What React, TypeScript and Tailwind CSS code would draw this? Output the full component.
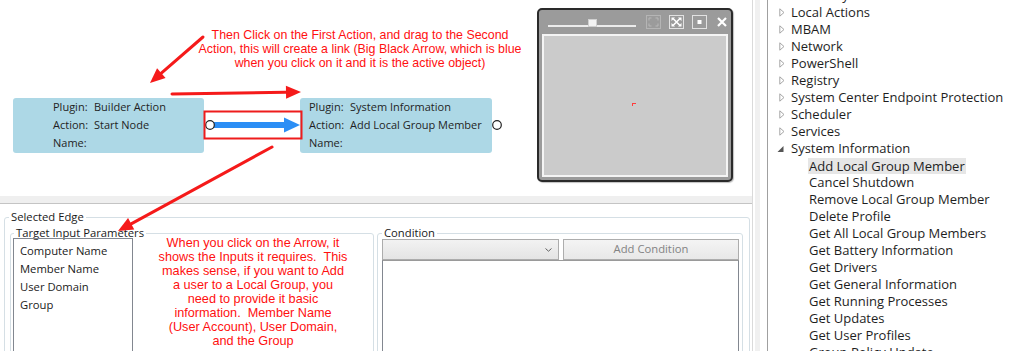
import React from 'react';

type Pt = [number, number];

// arrow head triangle + point where the shaft should stop
const head = (from: Pt, to: Pt, len = 15, half = 6.5) => {
  const dx = to[0] - from[0];
  const dy = to[1] - from[1];
  const d = Math.hypot(dx, dy);
  const ux = dx / d;
  const uy = dy / d;
  const bx = to[0] - ux * len;
  const by = to[1] - uy * len;
  return {
    base: [bx, by] as Pt,
    points: `${to[0]},${to[1]} ${bx - uy * half},${by + ux * half} ${bx + uy * half},${by - ux * half}`,
  };
};

const RedArrow = ({ from, to }: { from: Pt; to: Pt }) => {
  const h = head(from, to);
  return (
    <g>
      <line x1={from[0]} y1={from[1]} x2={h.base[0]} y2={h.base[1]} stroke="#f51a1a" strokeWidth={3} strokeLinecap="round" />
      <polygon points={h.points} fill="#f51a1a" />
    </g>
  );
};

const ActionNode = ({ plugin, action, className }: { plugin: string; action: string; className: string }) => (
  <div className={`absolute top-[98px] h-[55px] rounded-[3px] bg-[#add8e6] text-[11px] leading-[18px] text-[#1f1f1f] ${className}`}>
    <div className="flex">
      <span className="w-[41px] shrink-0">Plugin:</span>
      <span>{plugin}</span>
    </div>
    <div className="flex">
      <span className="w-[41px] shrink-0">Action:</span>
      <span>{action}</span>
    </div>
    <div className="flex">
      <span className="w-[41px] shrink-0">Name:</span>
    </div>
  </div>
);

const Collapsed = () => (
  <svg width="6" height="9" viewBox="0 0 6 9">
    <path d="M0.8 0.8 L5 4.5 L0.8 8.2 Z" fill="none" stroke="#a6a6a6" strokeWidth="1" />
  </svg>
);

const Expanded = () => (
  <svg width="7" height="9" viewBox="0 0 7 9">
    <path d="M6.5 2 L6.5 8 L0.5 8 Z" fill="#555555" />
  </svg>
);

const topLevel = ['Inventory', 'Local Actions', 'MBAM', 'Network', 'PowerShell', 'Registry', 'System Center Endpoint Protection', 'Scheduler', 'Services'];
const children = [
  'Add Local Group Member',
  'Cancel Shutdown',
  'Remove Local Group Member',
  'Delete Profile',
  'Get All Local Group Members',
  'Get Battery Information',
  'Get Drivers',
  'Get General Information',
  'Get Running Processes',
  'Get Updates',
  'Get User Profiles',
  'Group Policy Update',
];

const params = ['Computer Name', 'Member Name', 'User Domain', 'Group'];

export default function App() {
  return (
    <div className="flex h-[351px] w-[1024px] overflow-hidden bg-white font-['Open_Sans',sans-serif] text-[#1a1a1a]">
      {/* left: designer canvas + edge properties */}
      <div className="relative flex w-[753px] shrink-0 flex-col border-r border-[#dadada]">
        <div className="relative h-[196px] shrink-0">
          <ActionNode plugin="Builder Action" action="Start Node" className="left-[13px] w-[191px] pl-[40px]" />
          <ActionNode plugin="System Information" action="Add Local Group Member" className="left-[300px] w-[192px] pl-[9px]" />

          <svg className="absolute left-0 top-0" width="520" height="196">
            <rect x="214" y="122" width="72" height="6" fill="#2b8ef5" />
            <polygon points="284,117.5 300,125 284,132.5" fill="#2b8ef5" />
            <circle cx="210" cy="125" r="4.3" fill="#fff" stroke="#222" strokeWidth="1.2" />
            <circle cx="497" cy="125" r="4.3" fill="#fff" stroke="#222" strokeWidth="1.2" />
          </svg>

          {/* overview window */}
          <div className="absolute left-[537px] top-[8px] flex h-[174px] w-[196px] flex-col rounded-[5px] border-2 border-[#2a2a2a] bg-[#9b9b9b] shadow-[1px_1px_1px_rgba(0,0,0,0.25)]">
            <div className="flex h-[24px] shrink-0 items-center pl-[9px]">
              <div className="relative mt-[3px] h-[9px] w-[88px]">
                <div className="absolute bottom-[1px] left-0 h-[2px] w-[88px] bg-[#ececec]" />
                <div className="absolute left-[40px] top-0 h-[8px] w-[9px] border border-[#d0d0d0] bg-[#f3f3f3]" />
              </div>
              <svg className="ml-[10px]" width="15" height="14" viewBox="0 0 15 14">
                <rect x="0.5" y="0.5" width="14" height="13" fill="none" stroke="#b5b5b5" />
                <path d="M3 5.5 V3 H5.5 M9.5 3 H12 V5.5 M12 8.5 V11 H9.5 M5.5 11 H3 V8.5" fill="none" stroke="#b8b8b8" />
              </svg>
              <svg className="ml-[8px]" width="15" height="14" viewBox="0 0 15 14">
                <rect x="0.5" y="0.5" width="14" height="13" fill="none" stroke="#e2e2e2" />
                <path d="M4 3.5 L11 10.5 M11 3.5 L4 10.5" stroke="#fff" strokeWidth="1.6" />
                <path d="M2.5 2.5 H6 L2.5 6 Z M12.5 2.5 H9 L12.5 6 Z M2.5 11.5 H6 L2.5 8 Z M12.5 11.5 H9 L12.5 8 Z" fill="#fff" />
              </svg>
              <svg className="ml-[8px]" width="15" height="14" viewBox="0 0 15 14">
                <rect x="0.5" y="0.5" width="14" height="13" fill="none" stroke="#e2e2e2" />
                <rect x="5.5" y="5" width="4" height="4" fill="#fff" />
              </svg>
              <svg className="ml-[10px]" width="10" height="10" viewBox="0 0 10 10">
                <path d="M1 1 L9 9 M9 1 L1 9" stroke="#fff" strokeWidth="2.2" />
              </svg>
            </div>
            <div className="relative mx-[3px] mb-[3px] flex-1 border-2 border-[#f4f4f4] bg-[#cbcbcb]">
              <div className="absolute left-[88px] top-[67px] h-[3px] w-[4px] border-l border-t border-[#ff3c3c]" />
            </div>
          </div>

          <div className="absolute left-[160px] top-[28px] w-[400px] text-center font-['Liberation_Sans',Arial,sans-serif] text-[12.4px] leading-[14px] text-[#ff1010]">
            Then Click on the First Action, and drag to the Second
            <br />
            Action, this will create a link (Big Black Arrow, which is blue
            <br />
            when you click on it and it is the active object)
          </div>
        </div>

        {/* splitter */}
        <div className="h-[8px] shrink-0 border-b border-[#c4c4c4] bg-[#efefef]" />

        {/* selected edge */}
        <div className="flex-1 overflow-hidden pl-[4px] pt-[5px] text-[11.25px]">
          <fieldset className="h-[220px] w-[746px] rounded-[3px] border border-[#d5dfe5]">
            <legend className="ml-[4px] px-[2px] leading-[16px]">Selected Edge</legend>
            <div className="flex gap-[3px] pl-[5px] pt-[3px]">
              <fieldset className="h-[200px] w-[364px] rounded-[3px] border border-[#d5dfe5]">
                <legend className="ml-[3px] px-[2px] leading-[10px]">Target Input Parameters</legend>
                <div className="flex items-start pl-[2px]">
                  <div className="h-[130px] w-[120px] shrink-0 border border-[#828790] py-[3px]">
                    {params.map(p => (
                      <div key={p} className="h-[18px] pl-[6px] leading-[18px]">{p}</div>
                    ))}
                  </div>
                  <div className="-mt-[2px] flex-1 text-center font-['Liberation_Sans',Arial,sans-serif] text-[12.7px] leading-[14px] text-[#ff1010]">
                    When you click on the Arrow, it
                    <br />
                    shows the Inputs it requires.&nbsp; This
                    <br />
                    makes sense, if you want to Add
                    <br />
                    a user to a Local Group, you
                    <br />
                    need to provide it basic
                    <br />
                    information.&nbsp; Member Name
                    <br />
                    (User Account), User Domain,
                    <br />
                    and the Group
                  </div>
                </div>
              </fieldset>
              <fieldset className="h-[200px] w-[366px] rounded-[3px] border border-[#d5dfe5]">
                <legend className="ml-[4px] px-[2px] leading-[10px]">Condition</legend>
                <div className="pl-[4px] pt-[1px]">
                  <div className="flex gap-[4px]">
                    <div className="flex h-[21px] w-[177px] items-center justify-end border border-[#acacac] bg-gradient-to-b from-[#f2f2f2] to-[#e4e4e4] pr-[6px]">
                      <svg width="7" height="4" viewBox="0 0 7 4">
                        <path d="M0.5 0.5 L3.5 3.2 L6.5 0.5" fill="none" stroke="#606060" strokeWidth="1" />
                      </svg>
                    </div>
                    <div className="flex h-[21px] w-[176px] items-center justify-center border border-[#adadad] bg-gradient-to-b from-[#f4f4f4] to-[#e8e8e8] text-[#838383]">
                      Add Condition
                    </div>
                  </div>
                  <div className="h-[100px] w-[357px] border border-[#828790] border-t-[#9a9a9a]" />
                </div>
              </fieldset>
            </div>
          </fieldset>
        </div>

        {/* screenshot annotations */}
        <svg className="pointer-events-none absolute left-0 top-0" width="753" height="351">
          <rect x="204.5" y="111.5" width="97" height="27" fill="none" stroke="#ee1c1c" strokeWidth="2" />
          <RedArrow from={[203, 37]} to={[150, 83]} />
          <RedArrow from={[172, 94]} to={[301, 92]} />
          <RedArrow from={[272, 147]} to={[118, 231]} />
        </svg>
      </div>

      {/* splitter column */}
      <div className="flex w-[14px] shrink-0 pl-[2px]">
        <div className="w-[5px] bg-[#f0f0f0]" />
      </div>

      {/* toolbox tree */}
      <div className="flex-1 overflow-hidden border-l border-[#a0a0a0] text-[13px] text-[#1e1e1e]">
        <div className="-mt-[13px]">
          {topLevel.map(t => (
            <div key={t} className="flex h-[17px] items-center">
              <span className="flex w-[23px] shrink-0 pl-[11px]">
                <Collapsed />
              </span>
              <span className="whitespace-nowrap">{t}</span>
            </div>
          ))}
          <div className="flex h-[17px] items-center">
            <span className="flex w-[23px] shrink-0 pl-[9px]">
              <Expanded />
            </span>
            <span className="whitespace-nowrap">System Information</span>
          </div>
          {children.map((c, i) => (
            <div key={c} className="flex h-[17px] items-center pl-[40px]">
              <span className={i === 0 ? 'whitespace-nowrap bg-[#e6e6e6] px-[1px] leading-[16px]' : 'whitespace-nowrap px-[1px]'}>{c}</span>
            </div>
          ))}
        </div>
      </div>
    </div>
  );
}
